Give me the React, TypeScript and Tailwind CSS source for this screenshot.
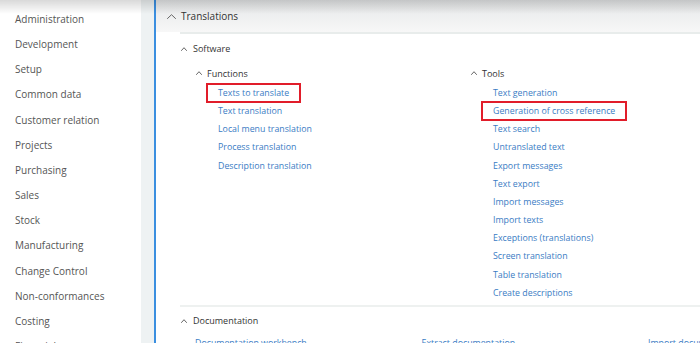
const menu = [
  "Administration",
  "Development",
  "Setup",
  "Common data",
  "Customer relation",
  "Projects",
  "Purchasing",
  "Sales",
  "Stock",
  "Manufacturing",
  "Change Control",
  "Non-conformances",
  "Costing",
  "Financials",
];

const functions = [
  "Texts to translate",
  "Text translation",
  "Local menu translation",
  "Process translation",
  "Description translation",
];

const tools = [
  "Text generation",
  "Generation of cross reference",
  "Text search",
  "Untranslated text",
  "Export messages",
  "Text export",
  "Import messages",
  "Import texts",
  "Exceptions (translations)",
  "Screen translation",
  "Table translation",
  "Create descriptions",
];

const docs = ["Documentation workbench", "Extract documentation", "Import documentation"];

function Chevron({ w = 6, h = 4 }: { w?: number; h?: number }) {
  return (
    <svg width={w} height={h} viewBox={`0 0 ${w} ${h}`} fill="none" aria-hidden className="shrink-0">
      <polyline
        points={`0.5,${h - 0.5} ${w / 2},0.7 ${w - 0.5},${h - 0.5}`}
        stroke="#666"
        strokeWidth="1"
        strokeLinecap="round"
        strokeLinejoin="round"
      />
    </svg>
  );
}

function LinkRow({ label, marked }: { label: string; marked?: boolean }) {
  return (
    <div className="h-[18.2px] pl-[22px] text-[8.8px] leading-[18.2px] text-[#3a7cc4]">
      <span className="relative inline-block">
        {label}
        {marked && (
          <span className="pointer-events-none absolute -inset-y-px -left-[12px] -right-[12px] border-2 border-[#e11d2a]" />
        )}
      </span>
    </div>
  );
}

function Group({ title, items, marked }: { title: string; items: string[]; marked: string }) {
  return (
    <div>
      <div className="flex h-[20.8px] items-center">
        <Chevron w={6} h={4} />
        <span className="ml-[5px] text-[9px] text-[#333]">{title}</span>
      </div>
      {items.map((it) => (
        <LinkRow key={it} label={it} marked={it === marked} />
      ))}
    </div>
  );
}

export default function App() {
  return (
    <div className="relative flex h-[343px] w-[700px] overflow-hidden bg-white font-['Open_Sans',sans-serif]">
      <aside className="w-[141px] shrink-0 bg-white pt-[7px]">
        {menu.map((m) => (
          <div key={m} className="h-[25.17px] pl-[15px] text-[10px] leading-[25.17px] text-[#555]">
            {m}
          </div>
        ))}
      </aside>
      <div className="w-[13px] shrink-0 bg-[#eef2f3]" />
      <div className="w-[2px] shrink-0 bg-[#3b8fe0]" />

      <main className="min-w-0 flex-1">
        <div className="flex h-[32px] items-center bg-gradient-to-b from-[#e6e8e9] to-[#f7f7f7] pl-[11px]">
          <Chevron w={9} h={5} />
          <span className="ml-[5px] text-[10px] text-[#333]">Translations</span>
        </div>
        <div className="ml-[24px] h-[2px] bg-[#e8eceb]" />

        <div className="flex h-[29px] items-center pl-[25px]">
          <Chevron w={6} h={4} />
          <span className="ml-[6px] text-[9px] text-[#333]">Software</span>
        </div>

        <div className="grid grid-cols-[275px_1fr] pl-[40px]">
          <Group title="Functions" items={functions} marked="Texts to translate" />
          <Group title="Tools" items={tools} marked="Generation of cross reference" />
        </div>

        <div className="ml-[24px] mt-[3px] h-[2px] bg-[#eef1f0]" />

        <div className="flex h-[27px] items-center pl-[25px]">
          <Chevron w={6} h={4} />
          <span className="ml-[6px] text-[9px] text-[#333]">Documentation</span>
        </div>
        <div className="flex pl-[39px] text-[8.8px] leading-[18px] text-[#3a7cc4]">
          {docs.map((d) => (
            <div key={d} className="w-[226.5px] shrink-0 whitespace-nowrap">
              {d}
            </div>
          ))}
        </div>
      </main>

      <div className="pointer-events-none absolute inset-x-0 top-0 h-[14px] bg-gradient-to-b from-black/15 to-transparent" />
    </div>
  );
}
